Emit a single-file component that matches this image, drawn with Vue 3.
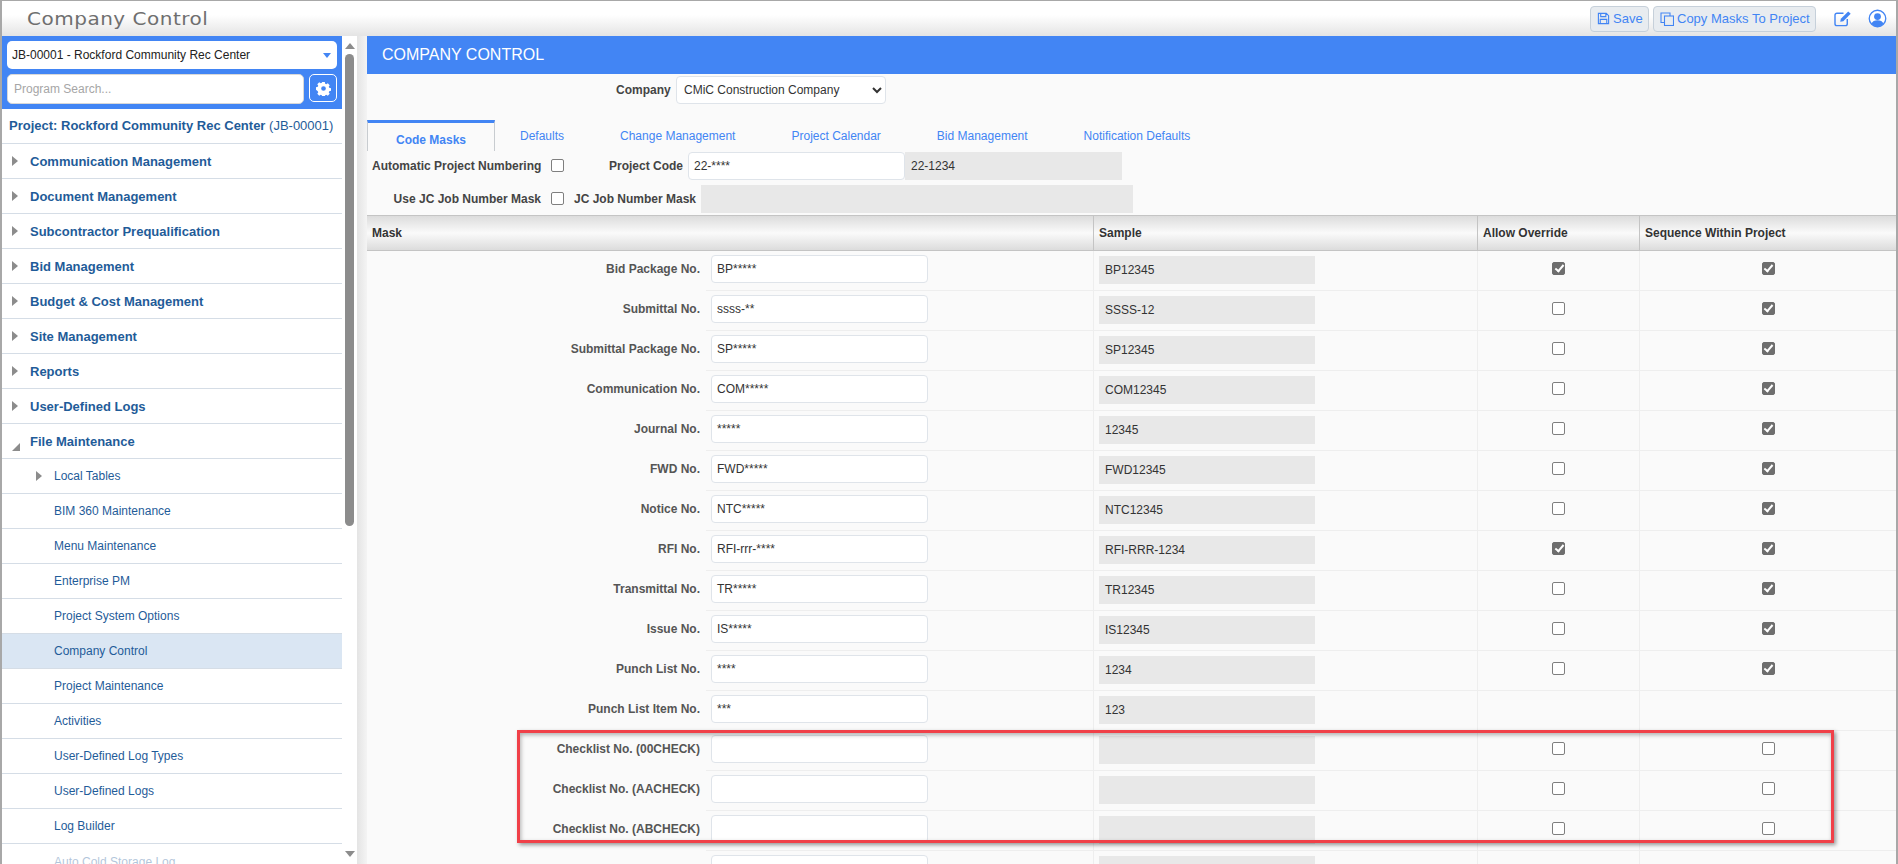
<script setup>
import { ref } from 'vue';

const tabs = ['Code Masks', 'Defaults', 'Change Management', 'Project Calendar', 'Bid Management', 'Notification Defaults'];
const currentTab = ref('Code Masks');

const menu = [
  { label: 'Communication Management', arrow: 'closed', bold: true },
  { label: 'Document Management', arrow: 'closed', bold: true },
  { label: 'Subcontractor Prequalification', arrow: 'closed', bold: true },
  { label: 'Bid Management', arrow: 'closed', bold: true },
  { label: 'Budget & Cost Management', arrow: 'closed', bold: true },
  { label: 'Site Management', arrow: 'closed', bold: true },
  { label: 'Reports', arrow: 'closed', bold: true },
  { label: 'User-Defined Logs', arrow: 'closed', bold: true },
  { label: 'File Maintenance', arrow: 'open', bold: true },
  { label: 'Local Tables', arrow: 'closed', sub: true },
  { label: 'BIM 360 Maintenance', sub: true },
  { label: 'Menu Maintenance', sub: true },
  { label: 'Enterprise PM', sub: true },
  { label: 'Project System Options', sub: true },
  { label: 'Company Control', sub: true, active: true },
  { label: 'Project Maintenance', sub: true },
  { label: 'Activities', sub: true },
  { label: 'User-Defined Log Types', sub: true },
  { label: 'User-Defined Logs', sub: true },
  { label: 'Log Builder', sub: true },
  { label: 'Auto Cold Storage Log', sub: true, faded: true },
];

const masks = ref([
  { label: 'Bid Package No.', mask: 'BP*****', sample: 'BP12345', override: true, seq: true },
  { label: 'Submittal No.', mask: 'ssss-**', sample: 'SSSS-12', override: false, seq: true },
  { label: 'Submittal Package No.', mask: 'SP*****', sample: 'SP12345', override: false, seq: true },
  { label: 'Communication No.', mask: 'COM*****', sample: 'COM12345', override: false, seq: true },
  { label: 'Journal No.', mask: '*****', sample: '12345', override: false, seq: true },
  { label: 'FWD No.', mask: 'FWD*****', sample: 'FWD12345', override: false, seq: true },
  { label: 'Notice No.', mask: 'NTC*****', sample: 'NTC12345', override: false, seq: true },
  { label: 'RFI No.', mask: 'RFI-rrr-****', sample: 'RFI-RRR-1234', override: true, seq: true },
  { label: 'Transmittal No.', mask: 'TR*****', sample: 'TR12345', override: false, seq: true },
  { label: 'Issue No.', mask: 'IS*****', sample: 'IS12345', override: false, seq: true },
  { label: 'Punch List No.', mask: '****', sample: '1234', override: false, seq: true },
  { label: 'Punch List Item No.', mask: '***', sample: '123', noChecks: true },
  { label: 'Checklist No. (00CHECK)', mask: '', sample: '', override: false, seq: false },
  { label: 'Checklist No. (AACHECK)', mask: '', sample: '', override: false, seq: false },
  { label: 'Checklist No. (ABCHECK)', mask: '', sample: '', override: false, seq: false },
  { label: '', mask: '', sample: '', noChecks: true },
]);
</script>

<template>
  <div class="window">
    <header class="topbar">
      <div class="app-title">Company Control</div>
      <div class="top-actions">
        <button class="top-btn save-btn">
          <svg class="btn-icon" viewBox="0 0 14 14" width="13" height="13">
            <path d="M1.5 1.5h8.5l2.5 2.5v8.5h-11z M4 1.5v3.5h5.5v-3.5 M3.5 12.5v-4.5h7v4.5" fill="none" stroke="currentColor" stroke-width="1.2" />
          </svg>
          Save
        </button>
        <button class="top-btn copy-btn">
          <svg class="btn-icon" viewBox="0 0 14 14" width="14" height="14">
            <path d="M4.5 10.5h-3.5v-9.5h9v3" fill="none" stroke="currentColor" stroke-width="1.1" />
            <rect x="4.5" y="4" width="9" height="9.5" fill="none" stroke="currentColor" stroke-width="1.1" />
          </svg>
          Copy Masks To Project
        </button>
        <svg class="edit-icon" viewBox="0 0 20 18" width="19" height="17">
          <path d="M14 9.5v5a2 2 0 0 1-2 2H3a2 2 0 0 1-2-2V5.5a2 2 0 0 1 2-2h7" fill="none" stroke="#4285f4" stroke-width="1.5" />
          <path d="M6.5 12.5l.7-3.2L15 1.5l2.6 2.6-7.8 7.7z" fill="#4285f4" />
        </svg>
        <svg class="user-icon" viewBox="0 0 20 20" width="19" height="19">
          <circle cx="10" cy="10" r="8.7" fill="#fff" stroke="#4285f4" stroke-width="1.4" />
          <circle cx="10" cy="8" r="3.6" fill="#4285f4" />
          <path d="M3.6 15.6c1-2.8 3.4-3.8 6.4-3.8s5.400 1 6.400 3.800a8.700 8.700 0 0 1-12.800 0z" fill="#4285f4" />
        </svg>
      </div>
    </header>

    <div class="body-row">
      <aside class="sidebar">
        <div class="side-main">
          <div class="side-top">
            <div class="project-select">
              <span>JB-00001 - Rockford Community Rec Center</span>
              <i class="select-caret"></i>
            </div>
            <div class="search-row">
              <input class="program-search" type="text" placeholder="Program Search...">
              <button class="gear-btn">
                <svg viewBox="0 0 16 16" width="15" height="15">
                  <path fill="#fff" fill-rule="evenodd" d="M6.600 1h2.800l.4 1.900 1.100.5 1.700-1 2 2-1 1.700.5 1.100 1.900.4v2.800l-1.900.4-.5 1.100 1 1.700-2 2-1.700-1-1.100.5-.4 1.900H6.600l-.4-1.900-1.100-.5-1.700 1-2-2 1-1.700-.5-1.100L0 9.400V6.600l1.900-.4.500-1.100-1-1.700 2-2 1.700 1 1.100-.5zM8 5.500a2.500 2.500 0 1 0 0 5 2.500 2.500 0 0 0 0-5z" />
                </svg>
              </button>
            </div>
          </div>
          <div class="project-name">Project: Rockford Community Rec Center <span>(JB-00001)</span></div>
          <ul class="menu">
            <li
              v-for="item in menu"
              :key="item.label + item.sub"
              :class="{ sub: item.sub, active: item.active, faded: item.faded, bold: item.bold }"
            >
              <i v-if="item.arrow" :class="['arrow', item.arrow]"></i>
              <span>{{ item.label }}</span>
            </li>
          </ul>
        </div>
        <div class="scrollbar">
          <i class="scroll-up"></i>
          <div class="scroll-track"><div class="scroll-thumb"></div></div>
          <i class="scroll-down"></i>
        </div>
      </aside>
      <div class="splitter"></div>

      <main class="content">
        <div class="page-title">COMPANY CONTROL</div>

        <div class="company-row">
          <label>Company</label>
          <select class="company-select">
            <option>CMiC Construction Company</option>
          </select>
        </div>

        <nav class="tabs">
          <a
            v-for="tab in tabs"
            :key="tab"
            :class="{ active: currentTab === tab }"
            @click="currentTab = tab"
          >{{ tab }}</a>
        </nav>

        <div class="form-row first">
          <label class="auto-label">Automatic Project Numbering</label>
          <i class="check"></i>
          <label class="code-label">Project Code</label>
          <div class="text-box code-box">22-****</div>
          <div class="read-box code-sample">22-1234</div>
        </div>
        <div class="form-row second">
          <label class="auto-label">Use JC Job Number Mask</label>
          <i class="check"></i>
          <label class="jc-label">JC Job Number Mask</label>
          <div class="read-box jc-box"></div>
        </div>

        <div class="grid-head">
          <div>Mask</div>
          <div>Sample</div>
          <div>Allow Override</div>
          <div>Sequence Within Project</div>
        </div>

        <div class="grid-body">
          <div v-for="(row, i) in masks" :key="i" class="grid-row">
            <div class="cell-mask">
              <label>{{ row.label }}</label>
              <div class="text-box mask-box">{{ row.mask }}</div>
            </div>
            <div class="cell-sample"><div class="read-box">{{ row.sample }}</div></div>
            <div class="cell-check"><i v-if="!row.noChecks" :class="['check', { on: row.override }]"></i></div>
            <div class="cell-check"><i v-if="!row.noChecks" :class="['check', { on: row.seq }]"></i></div>
          </div>
          <div class="highlight"></div>
        </div>
      </main>
    </div>
  </div>
</template>

<style>
html, body {
  margin: 0;
  background: #fff;
  overflow: hidden;
}
</style>

<style scoped>
.window {
  width: 1898px;
  height: 864px;
  box-sizing: border-box;
  border-top: 1px solid #a8a8a8;
  border-left: 2px solid #a8a8a8;
  border-right: 2px solid #a8a8a8;
  display: flex;
  flex-direction: column;
  overflow: hidden;
  font-family: "Liberation Sans", Arial, sans-serif;
  font-size: 12px;
  color: #333;
}

/* top bar */
.topbar {
  height: 35px;
  flex: none;
  display: flex;
  align-items: center;
  justify-content: space-between;
  background: linear-gradient(#fff 40%, #e4e4e4);
}

.app-title {
  margin-left: 25px;
  font-family: "DejaVu Sans", sans-serif;
  font-size: 20px;
  font-weight: 400;
  letter-spacing: 0.5px;
  color: #6f6f6f;
  transform-origin: left center;
  transform: scaleY(0.92);
}

.top-actions {
  display: flex;
  align-items: center;
  margin-right: 9px;
}

.top-btn {
  height: 26px;
  display: flex;
  align-items: center;
  gap: 3px;
  box-sizing: border-box;
  padding: 0 5px 0 6px;
  background: #e8ecf0;
  border: 1px solid #c6d0da;
  border-radius: 4px;
  color: #4285f4;
  font: 13px "Liberation Sans", Arial, sans-serif;
}

.save-btn { width: 59px; margin-right: 4px; }
.copy-btn { width: 163px; }

.edit-icon { margin-left: 18px; }
.user-icon { margin-left: 15px; }

.body-row {
  flex: 1;
  display: flex;
  min-height: 0;
}

/* sidebar */
.sidebar {
  width: 355px;
  flex: none;
  display: flex;
  background: #fff;
}

.side-main {
  width: 340px;
  flex: none;
  overflow: hidden;
}

.side-top {
  height: 73px;
  box-sizing: border-box;
  padding: 5px;
  background: #4285f4;
}

.project-select {
  height: 28px;
  box-sizing: border-box;
  display: flex;
  align-items: center;
  justify-content: space-between;
  padding: 0 6px 0 5px;
  background: #fff;
  border-radius: 5px;
  color: #222;
}

.select-caret {
  width: 0;
  height: 0;
  border-left: 4px solid transparent;
  border-right: 4px solid transparent;
  border-top: 5px solid #4285f4;
}

.search-row {
  display: flex;
  gap: 5px;
  margin-top: 5px;
}

.program-search {
  width: 297px;
  height: 30px;
  box-sizing: border-box;
  padding: 0 6px;
  border: 1px solid #d8d8d8;
  border-radius: 5px;
  font: 12px "Liberation Sans", Arial, sans-serif;
}

.program-search::placeholder {
  color: #a6a6a6;
}

.gear-btn {
  width: 28px;
  height: 28px;
  box-sizing: border-box;
  padding: 0;
  display: flex;
  align-items: center;
  justify-content: center;
  background: transparent;
  border: 1px solid #fff;
  border-radius: 5px;
}

.project-name {
  height: 35px;
  box-sizing: border-box;
  padding-left: 7px;
  line-height: 34px;
  border-bottom: 1px solid #d5dde6;
  font-size: 13px;
  font-weight: bold;
  color: #1f5c99;
}

.project-name span {
  font-weight: normal;
}

.menu {
  list-style: none;
  margin: 0;
  padding: 0;
}

.menu li {
  height: 35px;
  box-sizing: border-box;
  display: flex;
  align-items: center;
  position: relative;
  padding-left: 28px;
  border-bottom: 1px solid #d5dde6;
  color: #1f5c99;
  font-size: 12px;
}

.menu li.bold {
  font-size: 13px;
  font-weight: bold;
}

.menu li.sub {
  padding-left: 52px;
}

.menu li.active {
  background: #dae6f3;
}

.menu li.faded {
  opacity: 0.35;
  border-bottom: 0;
}

.arrow {
  position: absolute;
  left: 10px;
  top: 12px;
  width: 0;
  height: 0;
}

.arrow.closed {
  border-top: 5px solid transparent;
  border-bottom: 5px solid transparent;
  border-left: 6px solid #8c8c8c;
}

.arrow.open {
  top: 19px;
  border-left: 8px solid transparent;
  border-bottom: 8px solid #8c8c8c;
}

.sub .arrow {
  left: 34px;
}

.scrollbar {
  width: 15px;
  display: flex;
  flex-direction: column;
  align-items: center;
  padding-top: 7px;
  box-sizing: border-box;
  height: 828px;
}

.scroll-up {
  width: 0;
  height: 0;
  border-left: 5px solid transparent;
  border-right: 5px solid transparent;
  border-bottom: 6px solid #8c8c8c;
}

.scroll-track {
  flex: 1;
  width: 9px;
  margin-top: 5px;
}

.scroll-thumb {
  height: 472px;
  background: #8c8c8c;
  border-radius: 5px;
}

.scroll-down {
  margin-bottom: 7px;
  width: 0;
  height: 0;
  border-left: 5px solid transparent;
  border-right: 5px solid transparent;
  border-top: 6px solid #8c8c8c;
}

.splitter {
  width: 10px;
  flex: none;
  background: linear-gradient(90deg, #e4e4e4, #f4f4f4);
}

/* content */
.content {
  flex: 1;
  min-width: 0;
  background: #fafafa;
}

.page-title {
  height: 38px;
  box-sizing: border-box;
  padding-left: 15px;
  line-height: 38px;
  background: #4285f4;
  color: #fff;
  font-size: 16px;
}

.company-row {
  height: 46px;
  box-sizing: border-box;
  display: flex;
  align-items: flex-start;
  padding: 2px 0 0 249px;
}

.company-row label {
  font-weight: bold;
  line-height: 28px;
  color: #444;
  width: 54px;
}

.company-select {
  width: 210px;
  height: 28px;
  margin-left: 6px;
  padding-left: 3px;
  background: #fff;
  border: 1px solid #dfe4ea;
  border-radius: 4px;
  color: #333;
  font: 12px "Liberation Sans", Arial, sans-serif;
}

.tabs {
  height: 31px;
  display: flex;
  align-items: center;
  background: #fafafa;
}

.tabs a {
  color: #4285f4;
  padding: 0 28px;
  line-height: 30px;
}

.tabs a:nth-child(2) { margin-left: -3px; }

.tabs a.active {
  box-sizing: border-box;
  width: 128px;
  height: 31px;
  padding: 3px 0 0;
  text-align: center;
  font-weight: bold;
  line-height: 28px;
  border-top: 3px solid #4285f4;
  border-right: 1px solid #c8ccd0;
  border-left: 1px solid #c8ccd0;
  background: #fafafa;
}

.form-row {
  display: flex;
  align-items: center;
}

.form-row label {
  font-weight: bold;
  color: #444;
  white-space: nowrap;
}

.form-row.first {
  height: 27px;
  margin-top: 1px;
  margin-bottom: 5px;
}

.form-row.second {
  height: 29px;
  margin-bottom: 2px;
}

.auto-label {
  width: 169px;
  margin-left: 5px;
  text-align: right;
}

.form-row .check {
  margin-left: 10px;
}

.code-label {
  margin-left: 45px;
  width: 73px;
}

.jc-label {
  margin-left: 10px;
  width: 121px;
}

.code-box {
  width: 217px;
  margin-left: 6px;
}

.code-sample {
  width: 217px;
}

.jc-box {
  width: 432px;
  margin-left: 6px;
}

.text-box,
.read-box {
  height: 28px;
  box-sizing: border-box;
  line-height: 26px;
  padding: 0 5px;
  color: #333;
}

.text-box {
  background: #fff;
  border: 1px solid #dfe4ea;
  border-radius: 4px;
}

.read-box {
  background: #e8e8e8;
  padding-left: 6px;
  line-height: 28px;
}

.grid-head,
.grid-row {
  display: grid;
  grid-template-columns: 726px 384px 162px 1fr;
}

.grid-head {
  height: 36px;
  box-sizing: border-box;
  border-top: 1px solid #c4c4c4;
  border-bottom: 1px solid #c4c4c4;
  background: linear-gradient(#dcdcdc, #fafafa 50%, #dcdcdc);
  font-weight: bold;
  color: #333;
}

.grid-head > div {
  padding-left: 5px;
  line-height: 34px;
  border-left: 1px solid #c4c4c4;
}

.grid-head > div:first-child {
  border-left: 0;
}

.grid-body {
  position: relative;
}

.grid-row {
  height: 40px;
  box-sizing: border-box;
}

.grid-row > div {
  border-bottom: 1px solid #eeeeee;
}

.cell-mask {
  display: flex;
  align-items: center;
  justify-content: flex-end;
  border-bottom: 0 !important;
  position: relative;
  padding-bottom: 5px;
}

.cell-mask::after {
  content: '';
  position: absolute;
  right: 0;
  bottom: 0;
  width: 387px;
  height: 1px;
  background: #eeeeee;
}

.cell-mask label {
  font-weight: bold;
  color: #555;
  margin-right: 11px;
  white-space: nowrap;
}

.mask-box {
  width: 217px;
  margin-right: 165px;
}

.cell-sample {
  border-left: 1px solid #eeeeee;
  padding: 5px 0 0 5px;
}

.cell-sample .read-box {
  width: 216px;
}

.cell-check {
  border-left: 1px solid #eeeeee;
  display: flex;
  align-items: center;
  justify-content: center;
  padding-bottom: 5px;
}

.check {
  display: block;
  width: 13px;
  height: 13px;
  box-sizing: border-box;
  background: #fff;
  border: 1px solid #7f7f7f;
  border-radius: 2px;
  position: relative;
}

.check.on {
  background: #6e6e6e;
  border-color: #6e6e6e;
}

.check.on::after {
  content: '';
  position: absolute;
  left: 3.5px;
  top: 0.5px;
  width: 3px;
  height: 7px;
  border: solid #fff;
  border-width: 0 2px 2px 0;
  transform: rotate(40deg);
}

.highlight {
  position: absolute;
  left: 150px;
  top: 479px;
  width: 1317px;
  height: 113px;
  box-sizing: border-box;
  border: 3px solid #f04048;
  box-shadow: 2px 2px 4px rgba(0, 0, 0, 0.4), inset 1px 2px 4px rgba(0, 0, 0, 0.3);
  pointer-events: none;
}
</style>
